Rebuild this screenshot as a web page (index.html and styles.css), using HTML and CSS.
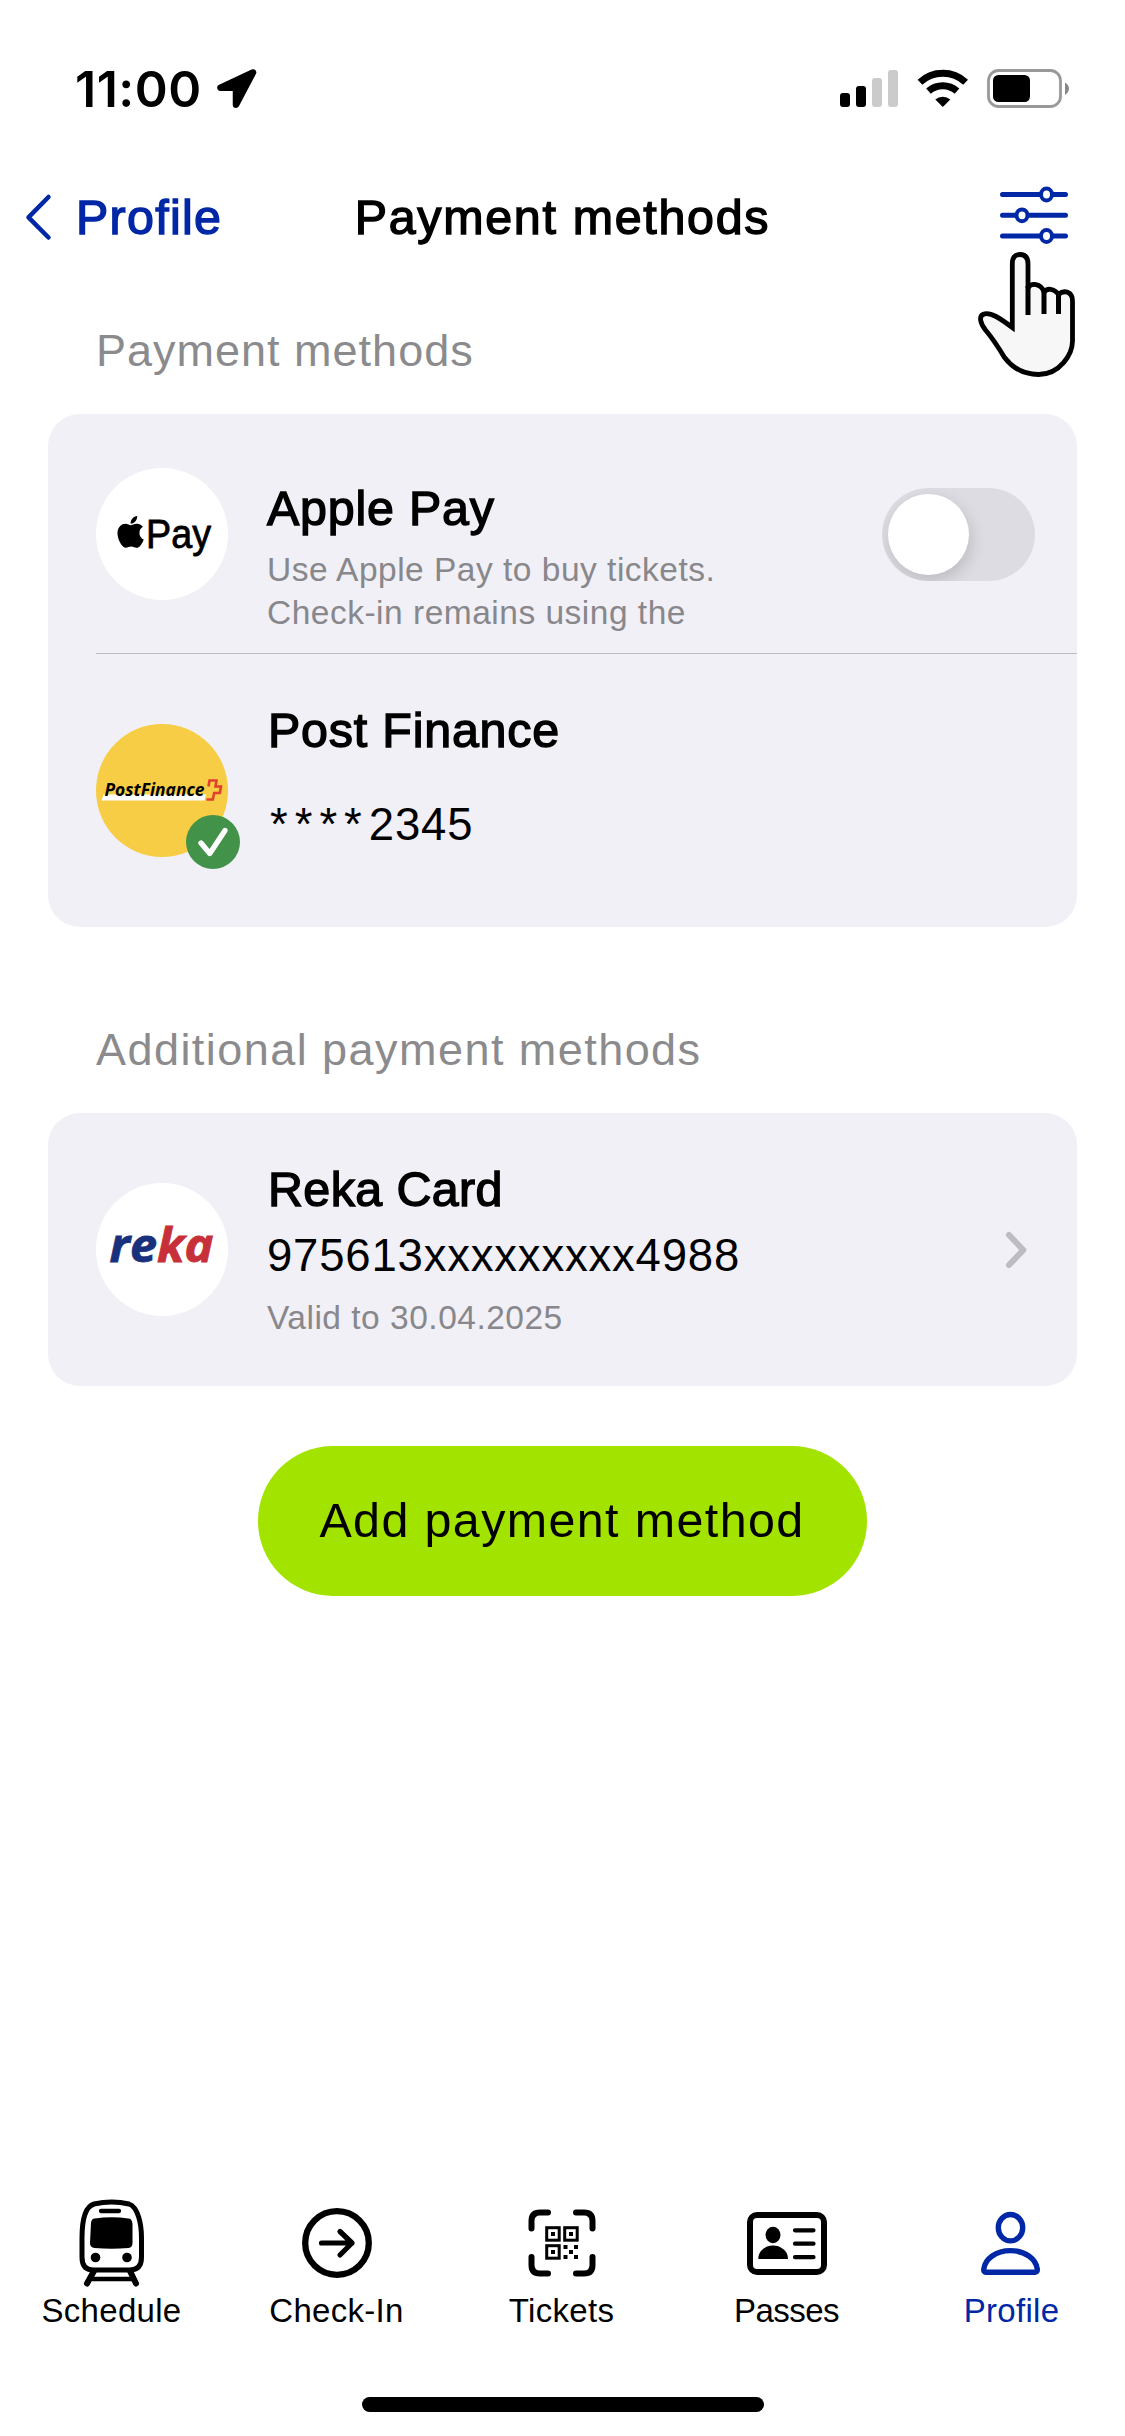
FILE: index.html
```
<!DOCTYPE html>
<html lang="en">
<head>
  <meta charset="utf-8" />
  <title>Payment methods</title>
  <link rel="stylesheet" href="styles.css">
</head>
<body>
  <div class="status-bar">
    <div class="status-left">
      <span class="time">11:00</span>
      <svg class="location" width="40" height="40" viewBox="0 0 40 40">
        <path d="M36 3.500L3.500 18.800H19V35.800Z" fill="#000" stroke="#000" stroke-width="6.500" stroke-linejoin="round" />
      </svg>
    </div>
    <svg width="230" height="40" viewBox="0 0 230 40">
      <rect x="1" y="24" width="10" height="14" rx="3" />
      <rect x="17" y="17" width="10" height="21" rx="3" />
      <rect x="33" y="9" width="10" height="29" rx="3" fill="#cbcbcb" />
      <rect x="49" y="1" width="10" height="37" rx="3" fill="#cbcbcb" />
      <g fill="none" stroke="#000">
        <path d="M81 13.200A33.500 33.500 0 0 1 126.600 13.200" stroke-width="7" />
        <path d="M89.500 22.200A21.500 21.500 0 0 1 118 22.200" stroke-width="7" />
      </g>
      <path d="M96.300 30.500A11.500 11.500 0 0 1 111.300 30.500L103.800 38Z" />
      <rect x="149.500" y="1.500" width="72" height="36" rx="10" fill="none" stroke="#999" stroke-width="2.800" />
      <rect x="154" y="6" width="37" height="27" rx="5.500" />
      <path d="M226 13.500Q230 16 230 19.500T226 26Z" fill="#888" />
    </svg>
  </div>

  <header class="nav">
    <a class="back">
      <svg width="30" height="48" viewBox="0 0 30 48">
        <path d="M24.500 4L4.500 24.300L24.500 44.500" fill="none" stroke="#0027a5" stroke-width="4.500" stroke-linecap="round" stroke-linejoin="round" />
      </svg>
      <span>Profile</span>
    </a>
    <h1>Payment methods</h1>
    <div class="settings">
      <svg width="68" height="62" viewBox="0 0 68 62">
        <g fill="#fff" stroke="#0027a5" stroke-width="5" stroke-linecap="round">
          <path d="M2.500 8.500H65.500M2.500 29.300H65.500M2.500 50H65.500" />
          <ellipse cx="46.500" cy="8.500" rx="5.500" ry="5.900" stroke-width="4" />
          <ellipse cx="22" cy="29.300" rx="5.500" ry="5.900" stroke-width="4" />
          <ellipse cx="46.500" cy="50" rx="5.500" ry="5.900" stroke-width="4" />
        </g>
      </svg>
      <svg class="hand" width="98" height="126" viewBox="0 0 98 126">
        <path d="M34.300 75.500V12C34.300 5.500 37 2.500 42 2.500S50 5.500 50 12V36C53 30.500 63 31 66 40C69 36 76 36 80.500 42.500C86 37.500 94.500 39.500 94.500 49V89C94.500 102 82 122.500 60.500 122.500C49 122.500 36.500 118.500 26.500 105.500C19 93 13 84.500 7.500 78C2 71 1 64.500 5 62.500C12 59 23 67 34.300 75.500Z" fill="#f7f7f7" stroke="#000" stroke-width="4.800" />
        <path d="M50 34V63M66 38V62M80.500 41V62" fill="none" stroke="#000" stroke-width="5" />
      </svg>
    </div>
  </header>

  <main>
    <h2>Payment methods</h2>
    <div class="card">
      <div class="row row-apple">
        <svg class="logo" width="132" height="132" viewBox="0 0 132 132">
          <circle cx="66" cy="66" r="66" fill="#fff" />
          <path transform="translate(21.200 45.800) scale(.0698 .0710)" d="M318.700 268.700c-.2-36.700 16.400-64.400 50-84.800-18.800-26.900-47.200-41.700-84.700-44.600-35.500-2.800-74.300 20.700-88.500 20.700-15 0-49.400-19.700-76.400-19.700C63.300 141.200 4 184.800 4 273.500q0 39.300 14.400 81.200c12.800 36.700 59 126.700 107.200 125.200 25.200-.6 43-17.900 75.800-17.900 31.800 0 48.300 17.900 76.400 17.900 48.600-.7 90.400-82.500 102.600-119.300-65.200-30.700-61.700-90-61.700-91.900zm-56.600-164.200c27.300-32.400 24.800-61.900 24-72.500-24.100 1.400-52 16.400-67.900 34.900-17.500 19.800-27.800 44.300-25.600 71.900 26.100 2 49.900-11.400 69.500-34.300z" />
          <text class="apple-text" x="50" y="79.500" textLength="65" lengthAdjust="spacingAndGlyphs">Pay</text>
        </svg>
        <div class="info">
          <h3>Apple Pay</h3>
          <p class="note">Use Apple Pay to buy tickets.<br>Check-in remains using the</p>
        </div>
        <div class="toggle"><div class="knob"></div></div>
      </div>
      <div class="row row-tall">
        <div class="logo logo-badge">
          <svg width="132" height="133" viewBox="0 0 132 133">
            <ellipse cx="66" cy="66.500" rx="66" ry="66.500" fill="#f7cd46" />
            <path d="M7.500 70.500H110L108.500 76.500H5.500Z" fill="#fff" />
            <text class="postfinance-text" x="8.500" y="72.300" textLength="100" lengthAdjust="spacingAndGlyphs">PostFinance</text>
            <path d="M112.500 62.500L113.500 56.500H120.500L119.500 62.500H125L123.800 69H118.200L116.800 75.500H110.500" fill="none" stroke="#e0402c" stroke-width="2.600" />
          </svg>
          <svg class="badge" width="54" height="54" viewBox="0 0 54 54">
            <circle cx="27" cy="27" r="27" fill="#429249" />
            <path d="M15 28L23.800 38.500L39 15.500" fill="none" stroke="#fff" stroke-width="5.300" stroke-linecap="round" stroke-linejoin="round" />
          </svg>
        </div>
        <div class="info">
          <h3 class="post-title">Post Finance</h3>
          <p class="number masked"><span class="stars">****</span>2345</p>
        </div>
      </div>
    </div>

    <h2 class="second">Additional payment methods</h2>
    <div class="card">
      <div class="row row-tall">
        <svg class="logo" width="132" height="133" viewBox="0 0 132 133">
          <ellipse cx="66" cy="66.500" rx="66" ry="66.500" fill="#fff" />
          <text class="reka-text" x="13.500" y="78.500" textLength="104" lengthAdjust="spacingAndGlyphs"><tspan fill="#19307c" stroke="#19307c">re</tspan><tspan fill="#c72f39" stroke="#c72f39">ka</tspan></text>
        </svg>
        <div class="info">
          <h3 class="reka-title">Reka Card</h3>
          <p class="number">975613xxxxxxxxx4988</p>
          <p class="note">Valid to 30.04.2025</p>
        </div>
        <svg class="chevron" width="22" height="38" viewBox="0 0 22 38">
          <path d="M4 4L18.300 19L4 34" fill="none" stroke="#bdbcc1" stroke-width="6" stroke-linecap="round" stroke-linejoin="round" />
        </svg>
      </div>
    </div>

    <button class="add">Add payment method</button>
  </main>

  <nav class="tabs">
    <a class="tab">
      <svg width="80" height="90" viewBox="0 0 80 90">
        <g fill="none" stroke="#000" stroke-width="5">
          <path d="M22 7Q40 3 57 7C66 10 69.500 27 69.500 41V60Q69.500 73 58 73H21Q10 73 10 60V41C10 27 12 10 22 7Z" />
          <path d="M29 14H47" stroke-width="4.300" stroke-linecap="round" />
          <path d="M22 74L15 86.500M58 74L64 86.500" stroke-width="6" stroke-linecap="round" />
          <path d="M20 82H60" stroke-width="4.500" />
        </g>
        <path d="M22.500 21.500Q40 19 56.500 21.500Q60 21.500 60.500 27V46Q60.500 50.500 56.500 51Q40 52.500 22.500 51Q18 50.500 18 46L19 26Q19.500 21.500 22.500 21.500Z" />
        <circle cx="23.500" cy="60.500" r="4.800" />
        <circle cx="55" cy="60.500" r="4.800" />
      </svg>
      <span>Schedule</span>
    </a>
    <a class="tab">
      <svg width="80" height="90" viewBox="0 0 80 90">
        <circle cx="40" cy="46" r="31.800" fill="none" stroke="#000" stroke-width="6.300" />
        <path d="M24.500 46H55M43 34.500L55 46L43 58" fill="none" stroke="#000" stroke-width="5.200" stroke-linecap="round" stroke-linejoin="round" />
      </svg>
      <span>Check-In</span>
    </a>
    <a class="tab">
      <svg width="80" height="90" viewBox="0 0 80 90">
        <path d="M26 15.500H18Q9.500 15.500 9.500 24V31.500M54 15.500H62Q70.500 15.500 70.500 24V31.500M9.500 60V68Q9.500 76.500 18 76.500H26M70.500 60V68Q70.500 76.500 62 76.500H54" fill="none" stroke="#000" stroke-width="6" stroke-linecap="round" />
        <g fill="none" stroke="#000" stroke-width="3">
          <rect x="24.700" y="30.700" width="12.500" height="12.500" />
          <rect x="42.700" y="30.700" width="12.500" height="12.500" />
          <rect x="24.700" y="48.700" width="12.500" height="12.500" />
        </g>
        <path d="M29 35h4v4h-4zM47 35h4v4h-4zM29 53h4v4h-4zM41.500 48h4v4h-4zM52 48h4v4h-4zM47 53h4v4h-4zM41.500 58h4v4h-4zM52 58h4v4h-4z" />
      </svg>
      <span>Tickets</span>
    </a>
    <a class="tab passes">
      <svg width="80" height="90" viewBox="0 0 80 90">
        <rect x="3" y="18" width="74" height="57" rx="7" fill="none" stroke="#000" stroke-width="6" />
        <ellipse cx="26" cy="38" rx="7.500" ry="8.200" />
        <path d="M11.300 62C11.300 53 19 48.500 26 48.500S41 53 41 62Z" />
        <path d="M48 33.300H66.500M48 46.700H66.500M48 60.200H66.500" stroke="#000" stroke-width="4.200" stroke-linecap="round" />
      </svg>
      <span>Passes</span>
    </a>
    <a class="tab active">
      <svg width="80" height="90" viewBox="0 0 80 90">
        <g fill="none" stroke="#0027a5" stroke-width="5.400">
          <ellipse cx="38.500" cy="30.700" rx="12.200" ry="13.200" />
          <path d="M14 75.300Q11.500 75 11.800 72C13 62 24 53.600 38.500 53.600S64 62 65.300 72Q65.500 75 63 75.300Z" stroke-linejoin="round" />
        </g>
      </svg>
      <span>Profile</span>
    </a>
  </nav>
  <div class="home-indicator"></div>
</body>
</html>
```

FILE: styles.css
```
* {
  box-sizing: border-box;
}
body {
  margin: 0;
  width: 1125px;
  height: 2436px;
  display: flex;
  flex-direction: column;
  background: #fff;
  color: #000;
  font-family: "Liberation Sans", Arial, sans-serif;
  overflow: hidden;
}
h1, h2, h3, p {
  margin: 0;
  font-weight: 400;
}
svg {
  display: block;
  flex: none;
}

/* Status bar */
.status-bar {
  height: 178px;
  padding: 0 56px 0 75px;
  display: flex;
  align-items: center;
  justify-content: space-between;
}
.status-left {
  display: flex;
  align-items: center;
  gap: 15px;
}
.time {
  font-family: Inter, sans-serif;
  font-size: 50px;
  font-weight: 600;
  line-height: 60px;
  letter-spacing: 0.5px;
}

/* Top navigation */
.nav {
  height: 78px;
  padding: 0 57px;
  display: grid;
  grid-template-columns: 1fr auto 1fr;
  align-items: center;
  font-size: 48.4px;
  line-height: 60px;
}
.back {
  display: flex;
  align-items: center;
  gap: 22px;
  margin-left: -33px;
  color: #0027a5;
  letter-spacing: 1.3px;
  -webkit-text-stroke: 1.4px #0027a5;
}
.nav h1 {
  font-size: 48.4px;
  letter-spacing: 1.7px;
  -webkit-text-stroke: 1.4px #000;
}
.settings {
  position: relative;
  justify-self: end;
}
.hand {
  position: absolute;
  top: 66px;
  left: -22px;
}

/* Cards */
main {
  padding: 65px 48px 0;
}
h2 {
  padding-left: 48px;
  font-size: 45px;
  line-height: 60px;
  letter-spacing: 1px;
  color: #8b8b8d;
}
h2.second {
  margin-top: 93px;
  letter-spacing: 1.45px;
}
.card {
  width: 1029px;
  margin-top: 33px;
  padding-left: 48px;
  border-radius: 32px;
  background: #f1f0f6;
}
.row {
  display: flex;
  align-items: center;
}
.row-apple {
  height: 240px;
  border-bottom: 1px solid #bcbbc1;
}
.row-tall {
  height: 273px;
}
.info {
  align-self: flex-start;
  flex: 1;
  margin-left: 39px;
  padding-top: 46px;
}
.row-apple .info {
  padding-top: 64px;
}
h3 {
  font-size: 48.4px;
  line-height: 60px;
  letter-spacing: 0.8px;
  -webkit-text-stroke: 1.4px #000;
}
.post-title {
  padding-left: 1px;
}
.reka-title {
  padding-left: 1px;
  letter-spacing: 0.4px;
}
.number {
  margin-top: 7px;
  font-size: 45.5px;
  line-height: 60px;
  letter-spacing: 0.8px;
}
.masked {
  margin-top: 35px;
  padding-left: 3px;
}
.stars {
  letter-spacing: 7px;
}
.note {
  margin-top: 10px;
  font-size: 33.5px;
  line-height: 43px;
  letter-spacing: 0.5px;
  color: #88878b;
}
.logo-badge {
  position: relative;
}
.badge {
  position: absolute;
  left: 90px;
  top: 91px;
}
.apple-text {
  font-size: 41px;
  stroke: #000;
  stroke-width: 0.8px;
}
.postfinance-text {
  font: italic 700 18.5px "Open Sans", sans-serif;
}
.reka-text {
  font: italic 700 46px "Open Sans", sans-serif;
  stroke-width: 0.8px;
}
.toggle {
  width: 153px;
  height: 93px;
  margin: 1px 42px 0 0;
  padding: 6px;
  border-radius: 47px;
  background: #dddce2;
  overflow: hidden;
}
.knob {
  width: 81px;
  height: 81px;
  border-radius: 50%;
  background: #fff;
  box-shadow: 2px 6px 16px rgba(0, 0, 0, 0.15);
}
.chevron {
  margin-right: 50px;
}
.add {
  display: block;
  width: 609px;
  height: 150px;
  margin: 60px auto 0;
  padding: 0 1px 2px 0;
  border: none;
  border-radius: 75px;
  background: #a3e300;
  color: #000;
  font-family: inherit;
  font-size: 48.4px;
  letter-spacing: 1.4px;
}

/* Bottom tabs */
.tabs {
  display: grid;
  grid-template-columns: repeat(5, 225px);
  margin-top: auto;
  margin-left: -1px;
}
.tab {
  display: flex;
  flex-direction: column;
  align-items: center;
  gap: 4px;
  font-size: 33px;
  line-height: 40px;
  letter-spacing: 0.3px;
}
.tab.passes {
  letter-spacing: -0.5px;
}
.tab.active {
  color: #0027a5;
}
.home-indicator {
  width: 402px;
  height: 15px;
  margin: 66px auto 24px;
  border-radius: 8px;
  background: #000;
}
```
